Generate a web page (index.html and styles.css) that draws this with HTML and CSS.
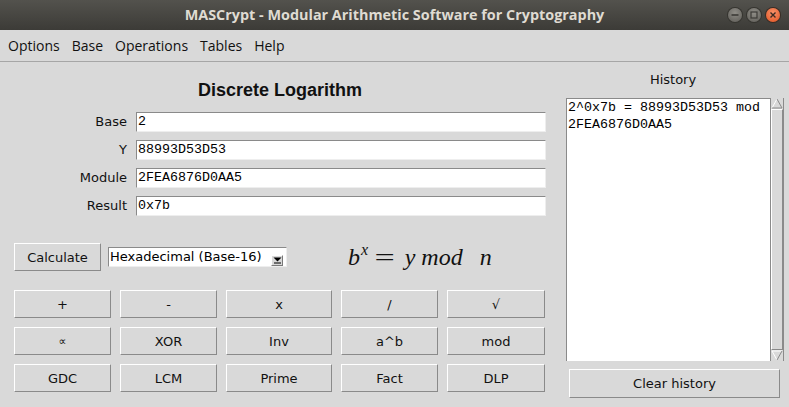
FILE: index.html
```html
<!DOCTYPE html>
<html>
<head>
<meta charset="utf-8">
<title>MASCrypt</title>
<link rel="stylesheet" href="styles.css">
</head>
<body>
<div class="titlebar">
  <span class="title">MASCrypt - Modular Arithmetic Software for Cryptography</span>
  <div class="controls">
    <span class="ctl min"><svg width="8" height="8" viewBox="0 0 8 8"><rect x="0.5" y="3.2" width="7" height="1.6" fill="#3c3b37"/></svg></span>
    <span class="ctl max"><svg width="8" height="8" viewBox="0 0 8 8"><rect x="1" y="1" width="6" height="6" fill="none" stroke="#3c3b37" stroke-width="1.2"/></svg></span>
    <span class="ctl close"><svg width="8" height="8" viewBox="0 0 8 8"><path d="M1.5 1.5 L6.5 6.5 M6.5 1.5 L1.5 6.5" stroke="#3c2a22" stroke-width="1.4"/></svg></span>
  </div>
</div>
<div class="menubar">
  <span class="mi">Options</span>
  <span class="mi">Base</span>
  <span class="mi">Operations</span>
  <span class="mi">Tables</span>
  <span class="mi">Help</span>
</div>
<div class="main">
  <div class="left">
    <h1 class="heading">Discrete Logarithm</h1>
    <div class="form">
      <label class="lbl">Base</label><div class="entry">2</div>
      <label class="lbl">Y</label><div class="entry">88993D53D53</div>
      <label class="lbl">Module</label><div class="entry">2FEA6876D0AA5</div>
      <label class="lbl">Result</label><div class="entry">0x7b</div>
    </div>
    <div class="actions">
      <button class="tkbtn calc">Calculate</button>
      <div class="select">
        <span class="seltext">Hexadecimal (Base-16)</span>
        <span class="selind"><svg width="9" height="7" viewBox="0 0 9 7"><polygon points="0.5,0.5 8.5,0.5 4.5,4.5" fill="#000"/><rect x="1" y="5.5" width="7" height="1" fill="#000"/></svg></span>
      </div>
      <div class="formula"><i>b</i><sup><i>x</i></sup><span class="eq">=</span><i>y</i><i class="w">mod</i><i>n</i></div>
    </div>
    <div class="ops">
      <button class="tkbtn">+</button>
      <button class="tkbtn">-</button>
      <button class="tkbtn">x</button>
      <button class="tkbtn">/</button>
      <button class="tkbtn">√</button>
      <button class="tkbtn small">∝</button>
      <button class="tkbtn">XOR</button>
      <button class="tkbtn">Inv</button>
      <button class="tkbtn">a^b</button>
      <button class="tkbtn">mod</button>
      <button class="tkbtn">GDC</button>
      <button class="tkbtn">LCM</button>
      <button class="tkbtn">Prime</button>
      <button class="tkbtn">Fact</button>
      <button class="tkbtn">DLP</button>
    </div>
  </div>
  <div class="right">
    <div class="histlabel">History</div>
    <div class="histbox">
      <div class="histtext">2^0x7b = 88993D53D53 mod<br>2FEA6876D0AA5</div>
      <div class="scroll">
        <div class="sarrow"><svg width="12" height="11" viewBox="0 0 12 11"><polygon points="1,10 6,1 11,10" fill="#d9d9d9"/><path d="M1 10 L6 1" stroke="#ffffff" stroke-width="1"/><path d="M6 1 L11 10 L1 10" stroke="#8a8a8a" stroke-width="1" fill="none"/></svg></div>
        <div class="slider"></div>
        <div class="sarrow"><svg width="12" height="11" viewBox="0 0 12 11"><polygon points="1,1 11,1 6,10" fill="#d9d9d9"/><path d="M6 10 L1 1 L11 1" stroke="#ffffff" stroke-width="1" fill="none"/><path d="M11 1 L6 10" stroke="#8a8a8a" stroke-width="1"/></svg></div>
      </div>
    </div>
    <button class="tkbtn clear">Clear history</button>
  </div>
</div>
</body>
</html>
```

FILE: styles.css
```css
* { box-sizing: border-box; }
html, body { margin: 0; padding: 0; }
body {
  width: 789px;
  height: 407px;
  overflow: hidden;
  background: #d9d9d9;
  font-family: "DejaVu Sans", sans-serif;
  font-size: 13px;
  color: #000;
}

.titlebar {
  height: 30px;
  background: linear-gradient(#53524d, #3c3b37);
  display: grid;
  grid-template-columns: 1fr auto 1fr;
  align-items: center;
}
.title {
  grid-column: 2;
  color: #dfdbd2;
  font-family: "Open Sans", sans-serif;
  font-weight: 700;
  font-size: 14.4px;
  line-height: 30px;
}
.controls {
  grid-column: 3;
  justify-self: end;
  display: flex;
  gap: 5px;
  padding-right: 9px;
}
.ctl {
  width: 14px;
  height: 14px;
  border-radius: 50%;
  display: flex;
  align-items: center;
  justify-content: center;
}
.ctl.min, .ctl.max {
  background: radial-gradient(circle at 50% 35%, #8f8d87, #5d5b56);
  box-shadow: 0 0 0 1px #35342f;
}
.ctl.close {
  background: radial-gradient(circle at 50% 35%, #f8936b, #e2511f);
  box-shadow: 0 0 0 1px #3a2c24;
}

.menubar {
  height: 32px;
  border-bottom: 1px solid #a6a6a6;
  display: flex;
  align-items: center;
  padding-left: 2px;
  font-family: "Open Sans", sans-serif;
  font-size: 14px;
  color: #111;
}
.mi { padding: 0 6px; }

.main { display: flex; }

.left { width: 560px; padding-top: 17px; }
.heading {
  margin: 0;
  font: 700 18px/22px "Liberation Sans", sans-serif;
  text-align: center;
  color: #111;
}
.form {
  margin-top: 11px;
  display: grid;
  grid-template-columns: 127px 410px;
  column-gap: 9px;
  row-gap: 8px;
}
.lbl {
  text-align: right;
  line-height: 20px;
  color: #111;
}
.entry {
  height: 20px;
  background: #fff;
  border: 1px solid;
  border-color: #8a8a8a #eeeeee #eeeeee #8a8a8a;
  font-family: "Liberation Mono", monospace;
  font-size: 13.33px;
  line-height: 18px;
  padding-left: 1px;
  color: #000;
}

.actions {
  margin-top: 27px;
  display: flex;
  align-items: center;
  height: 28px;
}
.tkbtn {
  background: #d9d9d9;
  border: 1px solid;
  border-color: #ffffff #8a8a8a #8a8a8a #ffffff;
  font-family: "DejaVu Sans", sans-serif;
  font-size: 13px;
  color: #111;
  padding: 0;
  margin: 0;
}
.calc { margin-left: 14px; width: 87px; height: 28px; }
.select {
  margin-left: 7px;
  width: 179px;
  height: 20px;
  background: #fff;
  border: 1px solid;
  border-color: #8a8a8a #eeeeee #eeeeee #8a8a8a;
  display: flex;
  align-items: flex-end;
  padding-left: 1px;
}
.seltext { flex: 1; line-height: 18px; align-self: center; }
.selind {
  width: 12px;
  height: 11px;
  margin: 0 3px 0 0;
  background: #d9d9d9;
  border: 1px solid;
  border-color: #ffffff #7a7a7a #7a7a7a #ffffff;
  display: flex;
  align-items: center;
  justify-content: center;
}
.formula {
  margin-left: 61px;
  font-family: "Liberation Serif", serif;
  font-size: 24px;
  color: #111;
  white-space: nowrap;
}
.formula sup { font-size: 16px; vertical-align: 10px; line-height: 0; margin-left: 1px; }
.formula .eq {
  display: inline-block;
  font-style: normal;
  transform: scaleX(1.5);
  margin: 0 13px 0 10px;
}
.formula .w { margin: 0 17px 0 6px; }

.ops {
  margin: 19px 0 0 14px;
  display: grid;
  grid-template-columns: 97px 97px 106px 97px 98px;
  grid-auto-rows: 28px;
  gap: 9px;
}
.ops .small { font-size: 11px; }

.right { width: 218px; margin-left: 6px; }
.histlabel {
  padding-top: 10px;
  line-height: 16px;
  text-align: center;
  padding-right: 4px;
  color: #111;
}
.histbox {
  margin-top: 10px;
  height: 263px;
  display: flex;
}
.histtext {
  width: 204px;
  background: #fff;
  border-top: 1px solid #8a8a8a;
  border-left: 1px solid #8a8a8a;
  font-family: "Liberation Mono", monospace;
  font-size: 13.33px;
  line-height: 17px;
  padding: 0 0 0 1px;
  color: #000;
}
.scroll {
  width: 14px;
  border-left: 1px solid #8a8a8a;
  border-right: 1px solid #8a8a8a;
  display: flex;
  flex-direction: column;
  background: #d9d9d9;
}
.sarrow { height: 11px; display: flex; justify-content: center; }
.slider {
  flex: 1;
  border: 1px solid;
  border-color: #ffffff #8a8a8a #8a8a8a #ffffff;
}
.clear {
  margin: 8px 0 0 3px;
  width: 211px;
  height: 29px;
}
```
